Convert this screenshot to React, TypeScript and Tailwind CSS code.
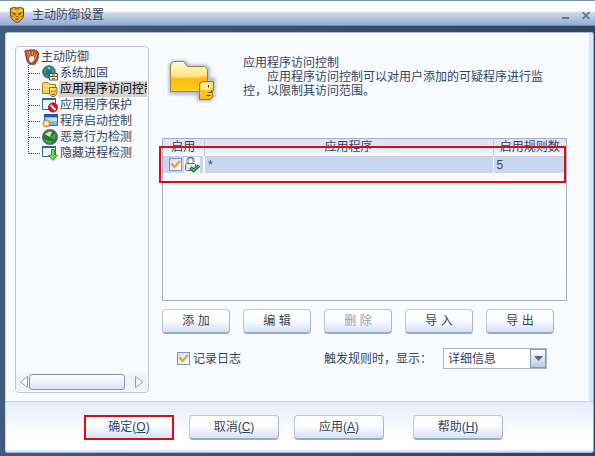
import { useState } from "react";
import type { ReactNode } from "react";

const FONT = "font-['Liberation_Sans','Noto_Sans_CJK_SC',sans-serif]";

/* ---------- Icons ---------- */

function TigerIcon() {
  return (
    <svg className="h-4 w-4 shrink-0" viewBox="0 0 16 16">
      <path d="M1.500 1.500 4.500.5 8 1 11.500.5l3 1V8c0 3.500-3 6-6.500 7.500C4.500 14 1.500 11.500 1.500 8z" fill="#e9a820" stroke="#6b4210" />
      <path d="M3 2.500h3l2 1 2-1h3v2.500L10 5 8 4 6 5 3 5z" fill="#f8cf4c" />
      <path d="M2.500 5 5 6M13.500 5 11 6M6.500 2l.5 1.500M9.500 2 9 3.500M2.500 9l2 .3M13.500 9l-2 .3" stroke="#8a5a14" fill="none" strokeWidth=".9" />
      <path d="M4.500 6.500 6.500 7.500M11.500 6.500 9.500 7.500" stroke="#3c2608" strokeWidth="1.200" />
      <path d="M7 9h2L8 10.200z" fill="#4a2d08" />
      <path d="M5.500 12c1-1.300 4-1.300 5 0L9.300 13.500H6.700z" fill="#8a3c10" stroke="#fbe48a" strokeWidth=".7" />
    </svg>
  );
}

function GloveIcon() {
  return (
    <svg className="h-4 w-4 shrink-0" viewBox="0 0 16 16">
      <path d="M.8 2 3 1l1.500.5L6 .6l2 .6 1.500-.6 2 .6 1.500.6 1.500 2-.5 6.500-3 5H5.500L3 12z" fill="#b9502f" stroke="#86351f" strokeWidth=".9" />
      <path d="M3 2.500 4.500 8M5.500 2l.5 4.500M8.500 2v4M11 2.500 10.300 7M13 5l-1.500 5" stroke="#e89a78" strokeWidth=".8" fill="none" />
      <path d="M5 9 7 7l3 .5.500 2.500L9 12.500 7 13.500 5.500 12z" fill="#fff" />
    </svg>
  );
}

function GlobeIcon() {
  return (
    <svg className="h-4 w-4 shrink-0" viewBox="0 0 16 16">
      <circle cx="7" cy="7" r="6.300" fill="#1f68b4" stroke="#16427c" strokeWidth=".7" />
      <path d="M1.500 5C3 1.500 5 .8 7 1L6 4 4.500 5.500 5 8 2.500 9zM9.500 1.500l3 3 .5 3-2.500 1L8.500 6 9 4zM2.500 10.500 6 9.500l1 3.500H5z" fill="#2fa048" />
      <path d="M5.500 2.500 8.500 2.300 7.500 5z" fill="#a8e4f8" />
      <path d="M7.500 8.500h8v6.500h-8z" fill="#fff3d4" stroke="#6e5034" />
      <path d="M8 11.500h7.500M10 10h3M10 13.500h3" stroke="#6e5034" />
    </svg>
  );
}

function FolderIcon() {
  return (
    <svg className="h-4 w-4 shrink-0" viewBox="0 0 16 16">
      <path d="M.5 12.500v-10l1-1H6l1.500 2h6v9z" fill="#f8d556" stroke="#a67c1c" />
      <path d="M1.500 5h11" stroke="#fff5b8" />
      <path d="M7.500 6.500h7.500v6l-2.500 3h-3L7.500 13z" fill="#fcd264" stroke="#8b681c" />
      <path d="M8.500 7.500h3v1.500h-3z" fill="#fff2b0" />
      <path d="M10 9.500v1.500M13 9.500v1.500M10 13.300h2.500" stroke="#5d410c" />
    </svg>
  );
}

function BlockedWindowIcon() {
  return (
    <svg className="h-4 w-4 shrink-0" viewBox="0 0 16 16">
      <path d="M.5 1.500h13v11H.5z" fill="#eef4fd" stroke="#3c6ca8" />
      <path d="M0 1h14v2H0z" fill="#2869b8" />
      <circle cx="11" cy="10.500" r="4.700" fill="#d31420" stroke="#9b1016" strokeWidth=".6" />
      <path d="M8.500 8l5 5" stroke="#fff" strokeWidth="2" />
    </svg>
  );
}

function LaunchIcon() {
  return (
    <svg className="h-4 w-4 shrink-0" viewBox="0 0 16 16">
      <path d="M2.500 1.500h13v11h-13z" fill="#7db8f0" stroke="#2a69b5" />
      <path d="M2 1h14v3H2z" fill="#1c58b4" />
      <path d="M4 5h11v3H4z" fill="#c2e2fb" />
      <circle cx="4.500" cy="10.500" r="3" fill="#fff0c0" stroke="#e0a03a" strokeWidth="1.400" />
      <path d="M4.500 6v2M4.500 13v2M0 10.500h2M7 10.500h2M1.300 7.300l1.300 1.300M6.500 12.500l1.300 1.300M7.800 7.300 6.500 8.600M1.300 13.800l1.300-1.300" stroke="#d79636" />
      <circle cx="4.500" cy="10.500" r="1.200" fill="#fff" />
    </svg>
  );
}

function RadarIcon() {
  return (
    <svg className="h-4 w-4 shrink-0" viewBox="0 0 16 16">
      <circle cx="8" cy="8" r="7" fill="#1c7a28" stroke="#5b6660" strokeWidth="2" />
      <path d="M8 8 3 5.500A5.500 5.500 0 0 1 10 3z" fill="#b8f0ae" />
      <path d="M8 8l5-3a6 6 0 0 1-1 6z" fill="#3fae44" />
      <path d="M3.500 10.500c1 2 3.500 3 6 2" stroke="#62c862" fill="none" strokeWidth="1.200" />
    </svg>
  );
}

function DownloadWindowIcon() {
  return (
    <svg className="h-4 w-4 shrink-0" viewBox="0 0 16 16">
      <path d="M.5 1.500h13v10H.5z" fill="#eef4fd" stroke="#3c5f9c" />
      <path d="M0 1h14v2H0z" fill="#2c62ae" />
      <path d="M9.500 4.500h3v5.500h3L11 15.500 6.500 10h3z" fill="#6cd850" stroke="#2f9a2c" strokeWidth=".9" />
    </svg>
  );
}

function BigFolderIcon() {
  return (
    <svg className="h-12 w-[52px]" viewBox="0 0 52 48">
      <defs>
        <linearGradient id="folder" x1="0" y1="0" x2="0" y2="1">
          <stop offset="0" stopColor="#fffbe0" />
          <stop offset=".5" stopColor="#fde57c" />
          <stop offset=".56" stopColor="#fcc71c" />
          <stop offset="1" stopColor="#fdd835" />
        </linearGradient>
        <filter id="glow" x="-20%" y="-20%" width="140%" height="140%">
          <feGaussianBlur stdDeviation="1.500" />
        </filter>
      </defs>
      <path d="M3 36V8l3-3h12l4 4h17l3 3v10h5v17l-4 4H32l-1-6z" fill="#7f9cc4" stroke="#7f9cc4" strokeWidth="3" filter="url(#glow)" opacity=".6" />
      <path d="M3.500 34.500V8l3-3.500h10l4 5h17l3 3v22z" fill="url(#folder)" stroke="#9c8440" />
      <path d="M4 33V19c12 5 24 3 36-1v15z" fill="#fdb400" opacity=".4" />
      <path d="M32.500 26.500 35 24.500h11.500v9l-1 1V40L43 42.500H32.500z" fill="#fdc01c" stroke="#a67618" />
      <path d="M33.500 27.500 36 25.500h9.500v6c-4 2-8 2-12 1z" fill="#ffeb96" />
      <path d="M41.500 28v2.500M44.500 33.500v2h-3M39.500 38.500h4" stroke="#5a3d0c" fill="none" />
    </svg>
  );
}

function LockIcon() {
  return (
    <svg className="h-4 w-4 shrink-0 bg-white" viewBox="0 0 16 16">
      <path d="M3.500 6.500V3C3.500 0 9.500 0 9.500 3v2" fill="none" stroke="#5a6b80" strokeWidth="2" />
      <path d="M3.500 6V3C3.500.8 9.500.8 9.500 3v1.500" fill="none" stroke="#e8edf4" strokeWidth=".7" />
      <path d="M1.500 7.500 2.500 6.500h8l1 1v5l-1 1h-8l-1-1z" fill="#e4e9f1" stroke="#56677c" />
      <path d="M6.500 10.500 9.500 13.500 15 8.500" fill="none" stroke="#17612d" strokeWidth="3.400" />
      <path d="M6.700 10.700 9.500 13.200 14.800 8.700" fill="none" stroke="#4fc366" strokeWidth="1.500" />
    </svg>
  );
}

/* ---------- Controls ---------- */

function CheckBox({ id, ariaLabel }: { id: string; ariaLabel?: string }) {
  return (
    <span className="relative block h-[13px] w-[13px] shrink-0">
      <input
        id={id}
        type="checkbox"
        defaultChecked
        aria-label={ariaLabel}
        className="peer block h-[13px] w-[13px] appearance-none border border-[#7e94b8] bg-gradient-to-br from-[#d5deec] to-white"
      />
      <svg className="pointer-events-none absolute inset-0 hidden h-[13px] w-[13px] peer-checked:block" viewBox="0 0 13 13">
        <path d="M2.500 5.500 5.500 9 11 3" fill="none" stroke="#f0a22c" strokeWidth="2.400" />
      </svg>
    </span>
  );
}

function SmallButton({ children, disabled }: { children: ReactNode; disabled?: boolean }) {
  return (
    <button
      disabled={disabled}
      className="h-[25px] w-[68px] rounded-[4px] border border-[#bcc6de] border-r-[#a5b6d6] border-b-2 border-b-[#94acd4] bg-gradient-to-b from-white from-40% to-[#d6e1f8] leading-none disabled:text-[#93a1b4]"
    >
      {children}
    </button>
  );
}

function FooterButton({ text, accessKey }: { text: string; accessKey: string }) {
  return (
    <button className="h-[25px] w-[90px] rounded-[4px] border border-[#bcc6de] border-r-[#a5b6d6] border-b-2 border-b-[#94acd4] bg-gradient-to-b from-white from-40% to-[#d6e1f8] leading-none">
      {text}(<u>{accessKey}</u>)
    </button>
  );
}

/* ---------- Sidebar tree ---------- */

const items = [
  { name: "系统加固", icon: <GlobeIcon /> },
  { name: "应用程序访问控制", icon: <FolderIcon /> },
  { name: "应用程序保护", icon: <BlockedWindowIcon /> },
  { name: "程序启动控制", icon: <LaunchIcon /> },
  { name: "恶意行为检测", icon: <RadarIcon /> },
  { name: "隐藏进程检测", icon: <DownloadWindowIcon /> },
];

function Sidebar() {
  const [selected, setSelected] = useState("应用程序访问控制");

  return (
    <aside className="flex w-[134px] shrink-0 flex-col overflow-hidden rounded-[4px] border border-[#c0c8d8] pt-[2px] pr-px">
      <div className="flex h-4 items-center gap-px pl-2">
        <GloveIcon />
        <span>主动防御</span>
      </div>
      <ul className="overflow-hidden pl-3">
        {items.map((item, i) => (
          <li key={item.name} className="flex h-4 items-center">
            {/* Dotted branch line */}
            <svg className="h-4 w-[14px] shrink-0" viewBox="0 0 14 16">
              <path
                d={i === items.length - 1 ? "M.5 0v9M1 8.500h11" : "M.5 0v16M1 8.500h11"}
                stroke="#39424e"
                strokeDasharray="1 1"
                fill="none"
              />
            </svg>
            {item.icon}
            <button
              onClick={() => setSelected(item.name)}
              className={`ml-px h-4 pl-px text-left leading-4 whitespace-nowrap ${
                selected === item.name ? "bg-[#d6d3ce] text-black" : ""
              }`}
            >
              {item.name}
            </button>
          </li>
        ))}
      </ul>
      {/* Horizontal scrollbar */}
      <div className="mt-auto mb-px flex h-[18px] items-center bg-[#f0f2fb] pl-1">
        <button aria-label="向左滚动" className="mr-px">
          <svg className="h-3 w-2" viewBox="0 0 8 12">
            <path d="M7.500.5v11L.5 6z" fill="#fff" stroke="#8b97b4" />
          </svg>
        </button>
        <div className="h-4 w-24 rounded-[3px] border border-[#8297bf] bg-gradient-to-b from-white to-[#d9e3f8]" />
        <button aria-label="向右滚动" className="ml-auto pr-1">
          <svg className="h-3 w-2" viewBox="0 0 8 12">
            <path d="M.5.5v11l7-5.500z" fill="#fff" stroke="#8b97b4" />
          </svg>
        </button>
      </div>
    </aside>
  );
}

/* ---------- Main area ---------- */

function RuleTable() {
  return (
    <div className="relative flex-1 border border-[#a9adcb]">
      <table className="w-full table-fixed border-collapse">
        <thead>
          <tr className="h-[17px] bg-gradient-to-b from-[#dfe5f6] from-40% to-[#f7f9ff] leading-4">
            <th className="w-[41px] border-r border-b border-[#c5cde3] p-0 font-normal">启用</th>
            <th className="border-r border-b border-[#c5cde3] p-0 font-normal">应用程序</th>
            <th className="w-[73px] border-b border-[#c5cde3] p-0 font-normal">启用规则数</th>
          </tr>
        </thead>
        <tbody>
          <tr className="h-[17px] bg-[#c8d7ef] leading-4">
            <td className="border-r-2 border-white p-0">
              <div className="flex items-center gap-[2px] pl-[6px]">
                <CheckBox id="rule-1" ariaLabel="启用规则" />
                <LockIcon />
              </div>
            </td>
            <td className="border-r border-white py-0 pr-0 pl-[3px]">*</td>
            <td className="py-0 pr-0 pl-[3px]">5</td>
          </tr>
        </tbody>
      </table>
      {/* Highlight around the rule row */}
      <div className="pointer-events-none absolute top-[7px] right-0 -left-1 h-[37px] border-2 border-[#dc0c14]" />
    </div>
  );
}

function AccessControl() {
  return (
    <section className="flex min-w-0 flex-1 flex-col pb-6">
      <header className="flex h-[92px] pl-[5px]">
        <div className="w-[76px] shrink-0 pt-[11px]">
          <BigFolderIcon />
        </div>
        <div className="pt-[10px] leading-[14px]">
          <h1>应用程序访问控制</h1>
          <p className="max-w-[304px] indent-[2em]">
            应用程序访问控制可以对用户添加的可疑程序进行监控，以限制其访问范围。
          </p>
        </div>
      </header>

      <RuleTable />

      <div className="mt-2 flex gap-[13px]">
        <SmallButton>添 加</SmallButton>
        <SmallButton>编 辑</SmallButton>
        <SmallButton disabled>删 除</SmallButton>
        <SmallButton>导 入</SmallButton>
        <SmallButton>导 出</SmallButton>
      </div>

      <div className="mt-[14px] flex h-[21px] items-center pl-[15px]">
        <div className="flex w-[147px] items-center gap-[3px]">
          <CheckBox id="log" />
          <label htmlFor="log">记录日志</label>
        </div>
        <label htmlFor="display" className="w-[119px]">触发规则时，显示：</label>
        <div className="relative h-[21px] w-[104px] border border-[#a8b4cc] bg-white">
          <select id="display" className="block h-full w-full appearance-none bg-transparent pl-1 leading-4 outline-none">
            <option>详细信息</option>
            <option>简要信息</option>
          </select>
          <span className="pointer-events-none absolute inset-y-0 right-0 flex w-4 items-center justify-center border border-[#8199c4] bg-gradient-to-b from-white to-[#bfcbe2]">
            <svg className="h-[5px] w-[9px]" viewBox="0 0 9 5">
              <path d="M0 0h9L4.500 5z" fill="#4e6690" />
            </svg>
          </span>
        </div>
      </div>
    </section>
  );
}

export default function App() {
  return (
    <div className={`flex min-h-screen flex-col bg-[#3b5074] text-[12px] leading-4 text-[#34455f] ${FONT}`}>
      {/* Title bar */}
      <div className="flex h-[26px] shrink-0 items-center border-t border-b border-t-[#7d95ae] border-b-[#6f8bb5] bg-gradient-to-b from-white from-40% via-[#cfd6ea] via-50% to-[#93acd3] pt-1 pr-[5px] pl-[9px]">
        <TigerIcon />
        <span className="ml-[7px]">主动防御设置</span>
        <button aria-label="最小化" className="ml-auto">
          <svg className="h-2 w-[7px]" viewBox="0 0 7 8">
            <path d="M0 6h7v2H0z" fill="#61779e" />
          </svg>
        </button>
        <button aria-label="关闭" className="ml-[13px]">
          <svg className="h-[7px] w-2" viewBox="0 0 8 7">
            <path d="M.5 0 7.500 7M7.500 0 .5 7" stroke="#61779e" strokeWidth="1.800" />
          </svg>
        </button>
      </div>

      <div className="flex flex-1 flex-col bg-gradient-to-r from-[#435a80] to-[#2f4562] pt-[6px] pr-px pb-[3px] pl-[5px]">
        <div className="flex flex-1 flex-col overflow-hidden rounded-[3px] border border-t-[#a9bcdc] border-r-[#8fabe0] border-b-[#9eb8e2] border-l-[#c4d3ee] bg-[#f8fbff]">
          <div className="flex flex-1 border-r-4 border-[#dbe6fb] pt-[13px] pr-[22px] pb-2 pl-[9px]">
            <Sidebar />
            <div className="w-[13px] shrink-0" />
            <AccessControl />
          </div>

          {/* Footer buttons */}
          <footer className="flex h-[51px] shrink-0 items-center gap-[15px] border-t border-b-2 border-t-[#c3d3ea] border-b-[#dbe7fa] bg-gradient-to-b from-[#e6edfb] to-white to-70% pt-[3px] pl-[78px]">
            <div className="relative">
              <FooterButton text="确定" accessKey="O" />
              <div className="pointer-events-none absolute inset-0 border-2 border-[#dc0c14]" />
            </div>
            <FooterButton text="取消" accessKey="C" />
            <FooterButton text="应用" accessKey="A" />
            <div className="ml-[14px]">
              <FooterButton text="帮助" accessKey="H" />
            </div>
          </footer>
        </div>
      </div>
    </div>
  );
}
